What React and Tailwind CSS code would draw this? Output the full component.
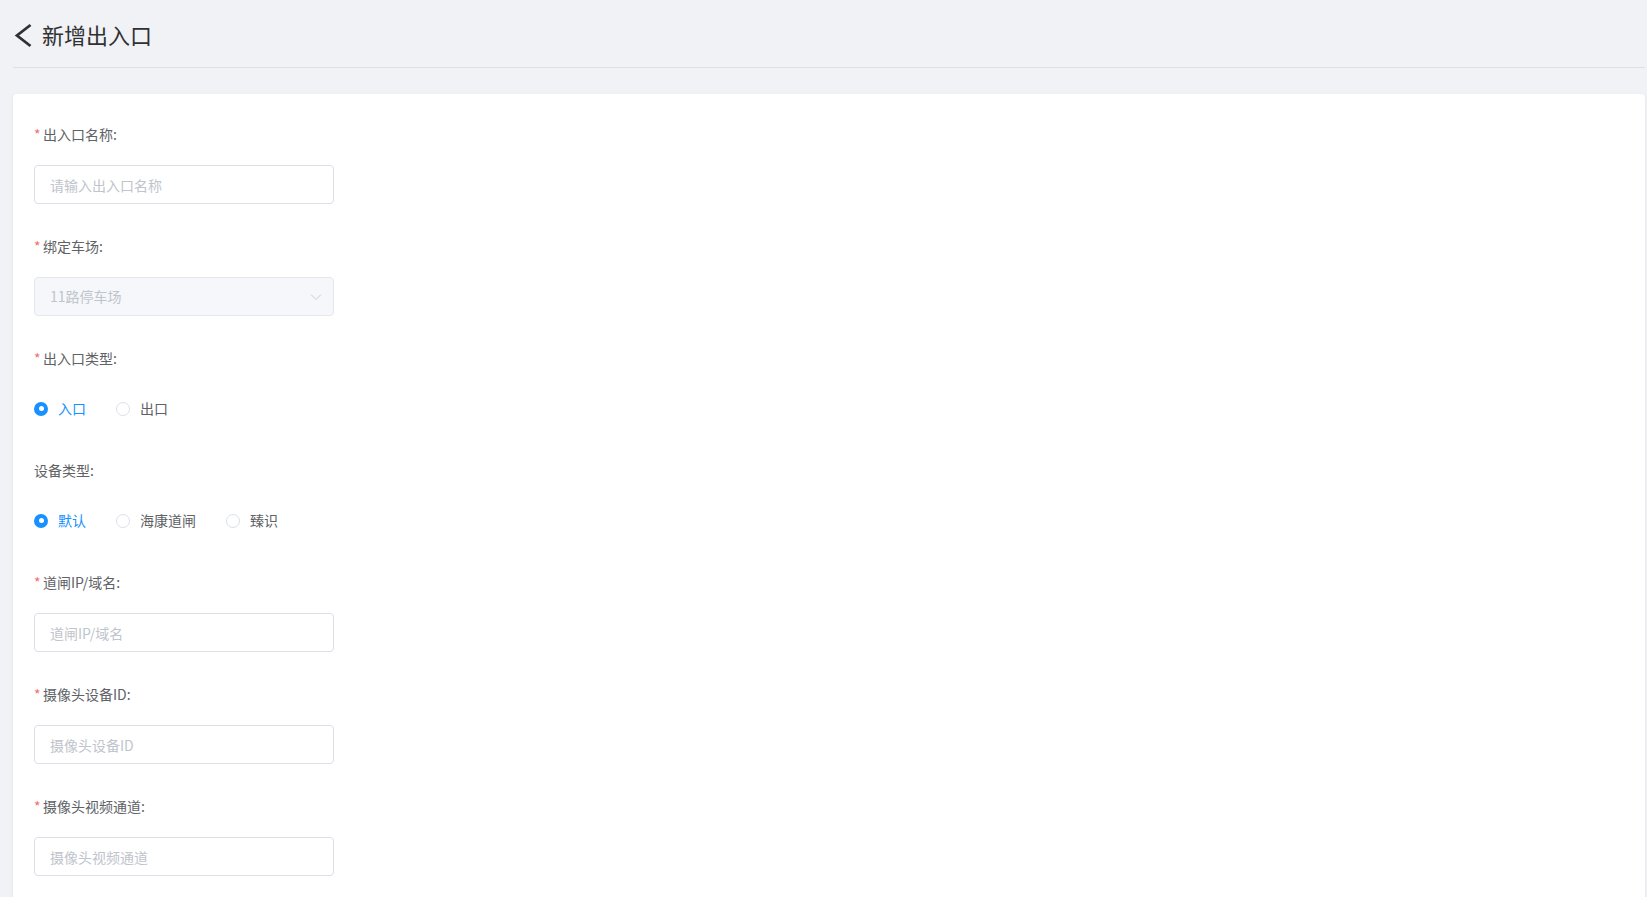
import { useState } from "react";

const font = { fontFamily: '"Noto Sans CJK SC", "Noto Sans", sans-serif' };

const Label = ({ text, required }) => (
    <div className="h-6 leading-6 text-[14px] text-[#606266] flex items-center">
        {required ? <span className="text-[#f56c6c] mr-[3px] w-[6px]">*</span> : ""}
        <span>{text}:</span>
    </div>
);

const TextField = ({ label, placeholder, required }) => (
    <div className="mb-[30px]">
        <Label text={label} required={required} />
        <input
            placeholder={placeholder}
            className="mt-[19px] block w-[300px] h-[39px] px-[15px] text-[14px] text-[#606266] placeholder:text-[#c0c4cc] border border-[#dcdfe6] rounded bg-white outline-none"
            style={font}
        />
    </div>
);

const Radio = ({ checked, text, onClick }) => (
    <label className="flex items-center mr-[30px] cursor-pointer" onClick={onClick}>
        <span
            className={
                "w-[14px] h-[14px] rounded-full flex items-center justify-center " +
                (checked ? "bg-[#1890ff]" : "border border-[#dcdfe6] bg-white")
            }
        >
            {checked ? <span className="w-[5px] h-[5px] rounded-full bg-white" /> : ""}
        </span>
        <span className={"ml-[10px] text-[14px] " + (checked ? "text-[#1890ff]" : "text-[#606266]")}>{text}</span>
    </label>
);

const RadioField = ({ label, options, required }) => {
    let [value, setValue] = useState(0);

    return (
        <div className="mb-[30px]">
            <Label text={label} required={required} />
            <div className="mt-[19px] h-[39px] flex items-center">
                {
                    options.map((opt, i) => (
                        <Radio key={i} checked={value === i} text={opt} onClick={() => setValue(i)} />
                    ))
                }
            </div>
        </div>
    );
};

export default function App() {
    return (
        <div className="min-h-screen bg-[#f0f2f5] pl-[13px] pr-[2px]" style={font}>
            <div className="h-[68px] flex items-center border-b border-[#dcdfe6]">
                <svg width="20" height="26" viewBox="0 0 20 26" className="mt-[2px]">
                    <path d="M17.5 3 L4 13.5 L17.5 24" fill="none" stroke="#303133" strokeWidth="2.8" />
                </svg>
                <h1 className="ml-[9px] text-[22px] text-[#303133] leading-none">新增出入口</h1>
            </div>

            <div className="mt-[26px] bg-white rounded shadow-[0_1px_4px_rgba(0,0,0,0.06)] pt-[28px] px-[21px] pb-[20px]">
                <TextField label="出入口名称" placeholder="请输入出入口名称" required />

                <div className="mb-[30px]">
                    <Label text="绑定车场" required />
                    <div className="mt-[19px] w-[300px] h-[39px] pl-[15px] pr-[11px] flex items-center justify-between border border-[#e4e7ed] rounded bg-[#f5f7fa] cursor-not-allowed">
                        <span className="text-[14px] text-[#c0c4cc]">11路停车场</span>
                        <svg width="12" height="8" viewBox="0 0 12 8">
                            <path d="M1 1.5 L6 6.5 L11 1.5" fill="none" stroke="#c8ccd4" strokeWidth="1" />
                        </svg>
                    </div>
                </div>

                <RadioField label="出入口类型" options={["入口", "出口"]} required />
                <RadioField label="设备类型" options={["默认", "海康道闸", "臻识"]} />

                <TextField label="道闸IP/域名" placeholder="道闸IP/域名" required />
                <TextField label="摄像头设备ID" placeholder="摄像头设备ID" required />
                <TextField label="摄像头视频通道" placeholder="摄像头视频通道" required />
            </div>
        </div>
    );
}
